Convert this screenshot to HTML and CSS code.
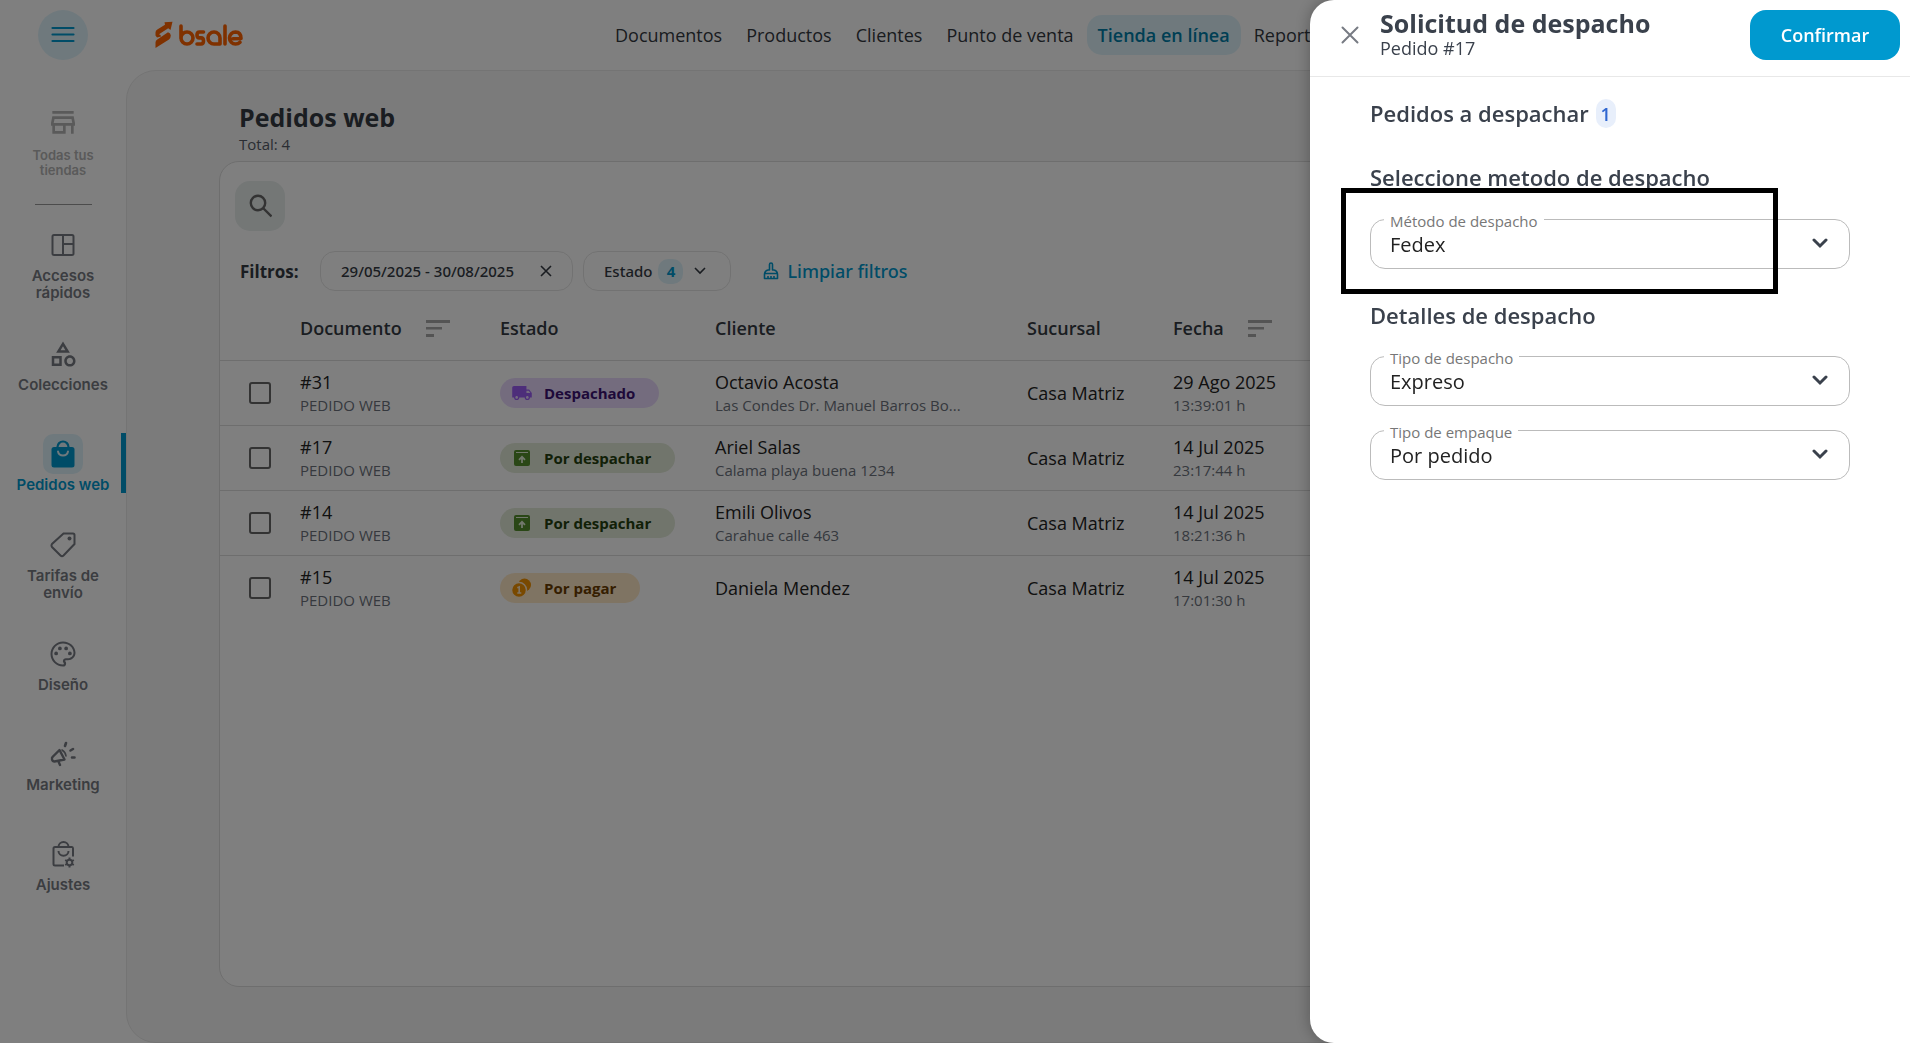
FILE: index.html
```html
<!DOCTYPE html>
<html lang="es">
<head>
    <meta charset="UTF-8">
    <meta name="viewport" content="width=device-width, initial-scale=1.0">
    <title>Pedidos web</title>
    <link rel="stylesheet" href="styles.css">
</head>
<body>
    <div class="app">
        <!-- Top bar -->
        <header class="topbar">
            <div class="menu-cell">
                <button class="menu-button" type="button" aria-label="Menú">
                    <svg width="24" height="18" viewBox="0 0 24 18"><path d="M1.500 2h21M1.500 8.500h21M1.500 15h21" stroke="currentColor" stroke-width="2.200" stroke-linecap="round"/></svg>
                </button>
            </div>
            <a class="logo" href="#" aria-label="bsale">
                <svg width="88" height="28" viewBox="0 0 88 28">
                    <path d="M0.500 14.500V11.500Q0.500 9.500 2.300 8.400L10 3.800L9.500 1.200L17.500 0.800L15.500 9L13.200 7.200L4 13.200Q6 13.500 6 15.500L2 16.500Z" fill="#ff6200"/>
                    <path d="M0.500 27V21.500Q0.500 19.500 2.300 18.400L13 11.300Q15.800 12 15.800 14.500Q15.600 17.500 14 18.500Z" fill="#ff6200"/>
                    <g fill="none" stroke="#ff6200" stroke-width="3.600" stroke-linecap="round" stroke-linejoin="round">
                        <path d="M26 5v12.500M38 17a6 6 0 1 1-12 0a6 6 0 1 1 12 0Z"/>
                        <path d="M48.500 11h-4q-2.500 0-2.500 2.900t2.500 3h1.500q2.500 0 2.500 3t-2.500 3.100h-4"/>
                        <path d="M65 23h-6a6 6 0 1 1 6-6v6"/>
                        <path d="M70 5v18"/>
                        <path d="M78 17.800l8-.3q0-6.300-5.500-6.500a6 6 0 1 0 0 12q2.800 0 4.500-1.800"/>
                    </g>
                </svg>
            </a>
            <nav class="main-nav">
                <a href="#">Documentos</a>
                <a href="#">Productos</a>
                <a href="#">Clientes</a>
                <a href="#">Punto de venta</a>
                <a class="active" href="#">Tienda en línea</a>
                <a href="#">Reportes</a>
            </nav>
        </header>

        <!-- Sidebar -->
        <aside class="sidebar">
            <a class="side-item stores" href="#">
                <span class="side-icon"><svg width="32" height="32" viewBox="0 0 24 24"><path fill="currentColor" d="M18.360 9l.6 3H5.040l.6-3h12.720M20 3H4v2h16V3zm0 4H4l-1 5v2h1v6h10v-6h4v6h2v-6h1v-2l-1-5zM6 18v-4h6v4H6z"/></svg></span>
                <span>Todas tus<br>tiendas</span>
            </a>
            <hr class="side-line">
            <a class="side-item" href="#">
                <span class="side-icon"><svg width="24" height="24" viewBox="0 0 24 24" fill="none" stroke="currentColor" stroke-width="2"><rect x="1.500" y="2" width="21" height="20" rx="1.500"/><path d="M12 2v20M12 11h10.500"/></svg></span>
                <span>Accesos<br>rápidos</span>
            </a>
            <a class="side-item" href="#">
                <span class="side-icon"><svg width="30" height="30" viewBox="0 0 24 24"><path fill="currentColor" d="M12 2l-5.500 9h11L12 2zm0 3.840L13.930 9h-3.870L12 5.840zM17.500 13c-2.490 0-4.500 2.010-4.500 4.500s2.010 4.500 4.500 4.500 4.500-2.010 4.500-4.500-2.010-4.500-4.500-4.500zm0 7c-1.380 0-2.500-1.120-2.500-2.500s1.120-2.500 2.500-2.500 2.500 1.120 2.500 2.500-1.120 2.500-2.500 2.500zM3 21.500h8v-8H3v8zm2-6h4v4H5v-4z"/></svg></span>
                <span>Colecciones</span>
            </a>
            <a class="side-item active" href="#">
                <span class="side-icon"><svg width="24" height="28" viewBox="0 0 24 28"><rect x="0.500" y="7" width="23" height="20.500" rx="2.500" fill="currentColor"/><path d="M6.500 8V7a5.500 5.500 0 0 1 11 0v1" fill="none" stroke="currentColor" stroke-width="2.200"/><path d="M7 11.500a5.100 5 0 0 0 10 0" fill="none" stroke="#dff3fb" stroke-width="2" stroke-linecap="round"/></svg></span>
                <span>Pedidos web</span>
            </a>
            <a class="side-item" href="#">
                <span class="side-icon"><svg width="26" height="26" viewBox="0 0 26 26"><path d="M13.500 1.500H23q1.500 0 1.500 1.500v9L13.500 23.500q-1.500 1.500-3 0l-8.500-8.500q-1-1.500 0-3z" fill="none" stroke="currentColor" stroke-width="2"/><circle cx="19.500" cy="6.500" r="2" fill="currentColor"/></svg></span>
                <span>Tarifas de<br>envío</span>
            </a>
            <a class="side-item" href="#">
                <span class="side-icon"><svg width="30" height="30" viewBox="0 0 24 24" fill="currentColor"><path d="M12 22C6.490 22 2 17.510 2 12S6.490 2 12 2s10 4.040 10 9c0 3.310-2.690 6-6 6h-1.770c-.28 0-.5.22-.5.5 0 .12.050.23.130.33.41.47.64 1.060.64 1.670A2.500 2.500 0 0 1 12 22zm0-18.400c-4.600 0-8.400 3.800-8.400 8.400s3.800 8.400 8.400 8.400c.4 0 .7-.4.7-.8 0-.2-.1-.4-.3-.6-.4-.5-.5-1-.5-1.500a2.500 2.500 0 0 1 2.500-2.100H16c2.300 0 4.400-2 4.400-4.400 0-4.100-3.800-7.400-8.400-7.400z"/><circle cx="6.500" cy="11.500" r="1.500"/><circle cx="9.500" cy="7.500" r="1.500"/><circle cx="14.500" cy="7.500" r="1.500"/><circle cx="17.500" cy="11.500" r="1.500"/></svg></span>
                <span>Diseño</span>
            </a>
            <a class="side-item" href="#">
                <span class="side-icon"><svg width="26" height="26" viewBox="0 0 26 26" fill="none" stroke="currentColor" stroke-width="2.400" stroke-linecap="round" stroke-linejoin="round"><path d="M9.500 9L14.500 18.500L4.500 20.500Q2.500 20.500 2 18.500T3 15.500Z"/><path d="M8.500 20.500l1.500 3.500"/><path d="M12 9q3.500 2 4 6" stroke-width="1.600"/><path d="M15 5l1-3M20.500 9.500l2.500-1.500M22 16.500h2.500" stroke-width="2.600"/></svg></span>
                <span>Marketing</span>
            </a>
            <a class="side-item" href="#">
                <span class="side-icon"><svg width="24" height="28" viewBox="0 0 24 28" fill="none" stroke="currentColor" stroke-width="2"><path d="M13 25.500H4q-1.500 0-1.500-1.500V8.500Q2.500 7 4 7h17q1 0 1 1.500v8"/><path d="M7.500 7.500V7a5 5 0 0 1 10 0v.5M7.500 11a5 4.800 0 0 0 10 0"/><circle cx="18.500" cy="22.500" r="2.800"/><path d="M18.500 17.500v2M18.500 25.500v2M14.200 20l1.700 1M21.100 24l1.700 1M14.200 25l1.700-1M21.100 21l1.700-1"/></svg></span>
                <span>Ajustes</span>
            </a>
        </aside>

        <!-- Orders -->
        <main class="content">
            <h1>Pedidos web</h1>
            <p class="total">Total: 4</p>
            <section class="card">
                <button class="search-button" type="button" aria-label="Buscar">
                    <svg width="24" height="24" viewBox="0 0 24 24" fill="none" stroke="currentColor" stroke-width="2.400"><circle cx="10" cy="9" r="7.200"/><path d="M15 14l8.500 8.500"/></svg>
                </button>
                <div class="filters">
                    <strong>Filtros:</strong>
                    <button class="chip date" type="button">
                        29/05/2025 - 30/08/2025
                        <svg width="12" height="12" viewBox="0 0 12 12" stroke="currentColor" stroke-width="1.600"><path d="M1 1l10 10M11 1L1 11"/></svg>
                    </button>
                    <button class="chip status" type="button">
                        Estado
                        <span class="chip-count">4</span>
                        <svg width="12" height="8" viewBox="0 0 12 8" fill="none" stroke="currentColor" stroke-width="1.600"><path d="M1 1l5 5 5-5"/></svg>
                    </button>
                    <button class="clear" type="button">
                        <svg width="16" height="18" viewBox="0 0 16 18" fill="none" stroke="currentColor" stroke-width="1.600" stroke-linejoin="round"><path d="M6.500 8V2.500a1.500 1.500 0 0 1 3 0V8h1.500q3 .5 3.500 4v4.500h-13V12q.5-3.500 3.500-4zM2 11.500h12M5 16.500V14M8 16.500V14M11 16.500V14"/></svg>
                        Limpiar filtros
                    </button>
                </div>
                <table class="orders">
                    <thead>
                        <tr>
                            <th class="col-check"></th>
                            <th class="col-doc"><span class="sortable">Documento <svg class="sort" width="24" height="17" viewBox="0 0 24 17"><path fill="currentColor" d="M0 0h24v3H0zM0 7h16v2.500H0zM0 14h8v3H0z"/></svg></span></th>
                            <th class="col-state">Estado</th>
                            <th class="col-client">Cliente</th>
                            <th class="col-branch">Sucursal</th>
                            <th><span class="sortable">Fecha <svg class="sort" width="24" height="17" viewBox="0 0 24 17"><path fill="currentColor" d="M0 0h24v3H0zM0 7h16v2.500H0zM0 14h8v3H0z"/></svg></span></th>
                        </tr>
                    </thead>
                    <tbody>
                        <tr>
                            <td><input type="checkbox" aria-label="Seleccionar #31"></td>
                            <td>#31<small>PEDIDO WEB</small></td>
                            <td><span class="state sent"><svg width="22" height="16" viewBox="1 3 22 18" fill="currentColor"><path d="M20 8h-3V4H3c-1.100 0-2 .9-2 2v11h2c0 1.660 1.340 3 3 3s3-1.340 3-3h6c0 1.660 1.340 3 3 3s3-1.340 3-3h2v-5l-3-4zM6 18.500c-.83 0-1.500-.67-1.500-1.500s.67-1.500 1.500-1.500 1.500.67 1.500 1.500-.67 1.500-1.500 1.500zm13.500-9l1.960 2.500H17V9.500h2.500zm-1.500 9c-.83 0-1.500-.67-1.500-1.500s.67-1.500 1.500-1.500 1.500.67 1.500 1.500-.67 1.500-1.500 1.500z"/></svg>Despachado</span></td>
                            <td>Octavio Acosta<small>Las Condes Dr. Manuel Barros Bo...</small></td>
                            <td>Casa Matriz</td>
                            <td>29 Ago 2025<small>13:39:01 h</small></td>
                        </tr>
                        <tr>
                            <td><input type="checkbox" aria-label="Seleccionar #17"></td>
                            <td>#17<small>PEDIDO WEB</small></td>
                            <td><span class="state ready"><svg width="22" height="16" viewBox="0 0 22 16"><rect x="3" width="16" height="16" rx="2" fill="currentColor"/><path d="M5 2.500h12" stroke="#e4f0d9" stroke-width="1"/><path d="M11 13V7.500M8 9.800l3-3 3 3" fill="none" stroke="#e4f0d9" stroke-width="1.800"/></svg>Por despachar</span></td>
                            <td>Ariel Salas<small>Calama playa buena 1234</small></td>
                            <td>Casa Matriz</td>
                            <td>14 Jul 2025<small>23:17:44 h</small></td>
                        </tr>
                        <tr>
                            <td><input type="checkbox" aria-label="Seleccionar #14"></td>
                            <td>#14<small>PEDIDO WEB</small></td>
                            <td><span class="state ready"><svg width="22" height="16" viewBox="0 0 22 16"><rect x="3" width="16" height="16" rx="2" fill="currentColor"/><path d="M5 2.500h12" stroke="#e4f0d9" stroke-width="1"/><path d="M11 13V7.500M8 9.800l3-3 3 3" fill="none" stroke="#e4f0d9" stroke-width="1.800"/></svg>Por despachar</span></td>
                            <td>Emili Olivos<small>Carahue calle 463</small></td>
                            <td>Casa Matriz</td>
                            <td>14 Jul 2025<small>18:21:36 h</small></td>
                        </tr>
                        <tr>
                            <td><input type="checkbox" aria-label="Seleccionar #15"></td>
                            <td>#15<small>PEDIDO WEB</small></td>
                            <td><span class="state unpaid"><svg width="22" height="20" viewBox="0 0 22 20"><circle cx="13.500" cy="7" r="6.500" fill="currentColor"/><circle cx="8" cy="12" r="7.500" fill="currentColor" stroke="#ffe8c7" stroke-width="1.500"/><path d="M6.300 9.800L8.200 9v6M6.300 15h4" fill="none" stroke="#ffe8c7" stroke-width="1.600"/></svg>Por pagar</span></td>
                            <td>Daniela Mendez</td>
                            <td>Casa Matriz</td>
                            <td>14 Jul 2025<small>17:01:30 h</small></td>
                        </tr>
                    </tbody>
                </table>
            </section>
        </main>
    </div>

    <div class="backdrop"></div>

    <!-- Dispatch drawer -->
    <div class="drawer" role="dialog" aria-labelledby="drawer-title">
        <div class="drawer-header">
            <button class="close" type="button" aria-label="Cerrar">
                <svg width="18" height="18" viewBox="0 0 18 18" stroke="currentColor" stroke-width="2" stroke-linecap="round"><path d="M1.500 1.500l15 15M16.500 1.500l-15 15"/></svg>
            </button>
            <div class="drawer-heading">
                <h2 id="drawer-title">Solicitud de despacho</h2>
                <p>Pedido #17</p>
            </div>
            <button class="confirm" type="button">Confirmar</button>
        </div>
        <form class="drawer-body">
            <h3>Pedidos a despachar <span class="count">1</span></h3>
            <h3>Seleccione metodo de despacho</h3>
            <div class="field marked">
                <label for="metodo">Método de despacho</label>
                <select id="metodo"><option>Fedex</option></select>
                <svg class="arrow" width="16" height="11" viewBox="0 0 16 11"><path d="M2 2l6 6 6-6"/></svg>
            </div>
            <h3>Detalles de despacho</h3>
            <div class="field">
                <label for="tipo">Tipo de despacho</label>
                <select id="tipo"><option>Expreso</option></select>
                <svg class="arrow" width="16" height="11" viewBox="0 0 16 11"><path d="M2 2l6 6 6-6"/></svg>
            </div>
            <div class="field">
                <label for="empaque">Tipo de empaque</label>
                <select id="empaque"><option>Por pedido</option></select>
                <svg class="arrow" width="16" height="11" viewBox="0 0 16 11"><path d="M2 2l6 6 6-6"/></svg>
            </div>
        </form>
    </div>
</body>
</html>
```
FILE: styles.css
```css
* {
    box-sizing: border-box;
}
body {
    margin: 0;
    font-family: "Open Sans", "Noto Sans", sans-serif;
    font-size: 18px;
    color: #222;
    background: #fff;
}
h1, h2, h3, p {
    margin: 0;
}
a {
    color: inherit;
    text-decoration: none;
}
button {
    font-family: inherit;
    color: inherit;
    border: none;
    background: none;
    padding: 0;
    cursor: pointer;
}
.app {
    display: grid;
    grid-template-columns: 126px 1fr;
    grid-template-rows: 70px 1fr;
    min-height: 100vh;
}

/* Top bar */
.topbar {
    grid-column: 1 / 3;
    display: flex;
    align-items: center;
}
.menu-cell {
    width: 126px;
    display: flex;
    justify-content: center;
}
.menu-button {
    width: 50px;
    height: 50px;
    border-radius: 50%;
    background: #dff3fb;
    color: #0099cf;
    display: flex;
    align-items: center;
    justify-content: center;
}
.logo {
    display: flex;
    margin-left: 29px;
}
.main-nav {
    display: flex;
    gap: 2px;
    margin-left: 361px;
    color: #33383f;
}
.main-nav a {
    line-height: 40px;
    padding: 0 11px;
    border-radius: 15px;
    white-space: nowrap;
}
.main-nav .active {
    background: #dff3fb;
    color: #007ea9;
    font-weight: 600;
}

/* Sidebar */
.sidebar {
    display: flex;
    flex-direction: column;
    font-family: Inter, sans-serif;
    font-size: 15px;
    font-weight: 600;
    line-height: 17px;
    color: #777a82;
    text-align: center;
}
.side-item {
    height: 100px;
    display: flex;
    flex-direction: column;
    align-items: center;
    justify-content: center;
    gap: 2px;
}
.side-item.stores {
    height: 134px;
    padding-top: 6px;
    font-size: 13px;
    line-height: 15px;
    gap: 5px;
    color: #b4b4b4;
}
.side-icon {
    width: 40px;
    height: 40px;
    border-radius: 10px;
    display: flex;
    align-items: center;
    justify-content: center;
}
.side-item.active {
    color: #0099cf;
    background: linear-gradient(#0099cf, #0099cf) right center / 5px 60px no-repeat;
}
.side-item.active .side-icon {
    background: #dff3fb;
}
.side-line {
    width: 57px;
    margin: 0 auto 8px;
    border: none;
    border-top: 1px solid #999;
}

/* Orders */
.content {
    background: #f7f7f7;
    border: 1px solid #e8e8e8;
    border-radius: 30px 0 0 30px;
    padding: 28px 92px 55px;
    display: flex;
    flex-direction: column;
}
.content h1 {
    font-size: 25px;
    line-height: 36px;
    color: #343a43;
    margin-left: 20px;
}
.total {
    font-size: 15px;
    line-height: 18px;
    margin: 0 0 8px 20px;
    color: #555b66;
}
.card {
    flex: 1;
    background: #fff;
    border: 1px solid #ddd;
    border-radius: 20px;
    padding-top: 19px;
}
.search-button {
    width: 50px;
    height: 50px;
    margin-left: 15px;
    border-radius: 15px;
    background: #e8eeed;
    color: #666;
    display: flex;
    align-items: center;
    justify-content: center;
}
.filters {
    display: flex;
    align-items: center;
    margin: 20px 0 6px 20px;
    color: #343a43;
}
.filters strong {
    width: 80px;
    font-size: 17px;
}
.chip {
    height: 40px;
    padding: 0 20px;
    margin-right: 10px;
    border: 1px solid #e5e5e5;
    border-radius: 15px;
    font-family: "Noto Sans", sans-serif;
    font-size: 15px;
    font-weight: 500;
    display: flex;
    align-items: center;
    gap: 6px;
}
.chip.date {
    gap: 26px;
}
.chip.status {
    padding-right: 24px;
}
.chip-count {
    width: 25px;
    line-height: 25px;
    margin-right: 5px;
    border-radius: 10px;
    background: #dff3fb;
    color: #0099cf;
    font-weight: 700;
}
.clear {
    display: flex;
    align-items: center;
    gap: 8px;
    margin-left: 22px;
    font-family: "Noto Sans", sans-serif;
    font-size: 18px;
    font-weight: 500;
    color: #0099cf;
}
.orders {
    width: 100%;
    table-layout: fixed;
    border-collapse: collapse;
}
.orders th {
    height: 63px;
    padding: 0;
    text-align: left;
    font-weight: 600;
    color: #343a43;
}
.orders td {
    height: 65px;
    padding: 0;
    border-top: 1px solid #ddd;
    line-height: 24px;
}
.orders small {
    display: block;
    font-size: 15px;
    line-height: 22px;
    color: #6c727c;
    white-space: nowrap;
}
.orders input {
    appearance: none;
    display: block;
    width: 22px;
    height: 22px;
    margin: 0 0 0 29px;
    border: 2px solid #666;
    border-radius: 3px;
}
.col-check {
    width: 80px;
}
.col-doc {
    width: 200px;
}
.col-state {
    width: 215px;
}
.col-client {
    width: 312px;
}
.col-branch {
    width: 146px;
}
.sortable {
    display: flex;
    align-items: center;
    gap: 24px;
}
.sort {
    color: #a8a8a8;
}
.state {
    display: inline-flex;
    align-items: center;
    gap: 11px;
    height: 30px;
    padding: 0 24px 0 11px;
    border-radius: 15px;
    font-size: 15px;
    font-weight: 700;
}
.sent {
    background: #e9d9fd;
    color: #3d1273;
}
.sent svg {
    color: #9b5cf5;
}
.ready {
    background: #e2ead8;
    color: #24400e;
}
.ready svg {
    color: #558f2d;
}
.unpaid {
    background: #ffe8c7;
    color: #6b3d00;
}
.unpaid svg {
    color: #f39200;
}

/* Drawer */
.backdrop {
    position: fixed;
    inset: 0;
    background: rgba(0, 0, 0, 0.5);
}
.drawer {
    position: fixed;
    top: 0;
    right: 0;
    bottom: 0;
    width: 600px;
    background: #fff;
    border-radius: 24px 0 0 24px;
    box-shadow: 0 0 16px rgba(0, 0, 0, 0.3);
}
.drawer-header {
    height: 77px;
    display: flex;
    align-items: flex-start;
    padding: 10px 10px 0 31px;
    border-bottom: 1px solid #e8e8e8;
}
.close {
    width: 18px;
    height: 50px;
    margin-right: 21px;
    color: #777b83;
    display: flex;
    align-items: center;
}
.drawer-heading {
    flex: 1;
    color: #3a414c;
}
.drawer-heading h2 {
    font-size: 25px;
    line-height: 26px;
}
.drawer-heading p {
    line-height: 24px;
}
.confirm {
    width: 150px;
    height: 50px;
    border-radius: 16px;
    background: #0099cf;
    color: #fff;
    font-size: 18px;
    font-weight: 600;
}
.drawer-body {
    padding: 20px 60px 0;
}
.drawer-body h3 {
    height: 32px;
    font-size: 22px;
    font-weight: 600;
    line-height: 32px;
    color: #3a414c;
    margin-bottom: 32px;
    display: flex;
    align-items: center;
    gap: 7px;
}
.count {
    width: 20px;
    height: 29px;
    border-radius: 10px;
    background: #e8effb;
    color: #2f66d0;
    font-size: 18px;
    line-height: 30px;
    text-align: center;
}
.field {
    position: relative;
    margin: -7px 0 31px;
}
.field + .field {
    margin-top: -7px;
}
.field.marked {
    margin: -6px 0 30px;
}
.field label {
    position: absolute;
    top: -9px;
    left: 14px;
    padding: 0 6px;
    background: #fff;
    font-size: 15px;
    line-height: 22px;
    color: #777;
}
.field select {
    appearance: none;
    width: 100%;
    height: 50px;
    padding: 1px 19px 0;
    border: 1px solid #bbb;
    border-radius: 15px;
    background: #fff;
    color: #222;
    font-family: inherit;
    font-size: 20px;
}
.arrow {
    position: absolute;
    right: 22px;
    top: 19px;
    fill: none;
    stroke: #3a414c;
    stroke-width: 3;
    stroke-linecap: round;
    pointer-events: none;
}
/* highlight frame over the dispatch method */
.marked::after {
    content: "";
    position: absolute;
    left: -29px;
    right: 72px;
    top: -31px;
    bottom: -25px;
    border: 5px solid #000;
    pointer-events: none;
}
```
